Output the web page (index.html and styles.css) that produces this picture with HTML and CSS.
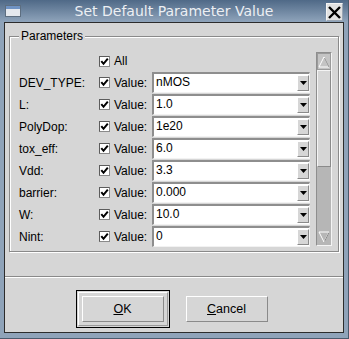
FILE: index.html
```html
<!DOCTYPE html>
<html>
<head>
    <title>Set Default Parameter Value</title>
    <meta name="viewport" content="width=device-width, initial-scale=1">
    <link rel="stylesheet" href="styles.css">
</head>
<body>
    <div class="window">
        <div class="titlebar">
            <span class="win-icon"><span class="win-icon-bar"></span></span>
            <span class="title">Set Default Parameter Value</span>
            <span class="close-btn">
                <svg width="13" height="13" viewBox="0 0 13 13"><path d="M1 1 L12 12 M12 1 L1 12" stroke="#000" stroke-width="2.4" fill="none"/></svg>
            </span>
        </div>
        <div class="client">
            <fieldset class="group">
                <legend>Parameters</legend>
                <div class="scroll-view">
                    <div class="rows">
                        <span></span>
                        <span class="check"><svg width="9" height="9" viewBox="0 0 9 9"><polyline points="1.3,4.2 3.5,6.8 7.8,1.6" stroke="#000" stroke-width="2" fill="none"/></svg></span>
                        <span class="text">All</span>
                        <span></span>

                        <span class="text">DEV_TYPE:</span>
                        <span class="check"><svg width="9" height="9" viewBox="0 0 9 9"><polyline points="1.3,4.2 3.5,6.8 7.8,1.6" stroke="#000" stroke-width="2" fill="none"/></svg></span>
                        <span class="text">Value:</span>
                        <div class="combo"><span class="combo-text">nMOS</span><span class="combo-btn"><svg width="7" height="4" viewBox="0 0 7 4"><polygon points="0,0 7,0 3.5,4" fill="#000"/></svg></span></div>

                        <span class="text">L:</span>
                        <span class="check"><svg width="9" height="9" viewBox="0 0 9 9"><polyline points="1.3,4.2 3.5,6.8 7.8,1.6" stroke="#000" stroke-width="2" fill="none"/></svg></span>
                        <span class="text">Value:</span>
                        <div class="combo"><span class="combo-text">1.0</span><span class="combo-btn"><svg width="7" height="4" viewBox="0 0 7 4"><polygon points="0,0 7,0 3.5,4" fill="#000"/></svg></span></div>

                        <span class="text">PolyDop:</span>
                        <span class="check"><svg width="9" height="9" viewBox="0 0 9 9"><polyline points="1.3,4.2 3.5,6.8 7.8,1.6" stroke="#000" stroke-width="2" fill="none"/></svg></span>
                        <span class="text">Value:</span>
                        <div class="combo"><span class="combo-text">1e20</span><span class="combo-btn"><svg width="7" height="4" viewBox="0 0 7 4"><polygon points="0,0 7,0 3.5,4" fill="#000"/></svg></span></div>

                        <span class="text">tox_eff:</span>
                        <span class="check"><svg width="9" height="9" viewBox="0 0 9 9"><polyline points="1.3,4.2 3.5,6.8 7.8,1.6" stroke="#000" stroke-width="2" fill="none"/></svg></span>
                        <span class="text">Value:</span>
                        <div class="combo"><span class="combo-text">6.0</span><span class="combo-btn"><svg width="7" height="4" viewBox="0 0 7 4"><polygon points="0,0 7,0 3.5,4" fill="#000"/></svg></span></div>

                        <span class="text">Vdd:</span>
                        <span class="check"><svg width="9" height="9" viewBox="0 0 9 9"><polyline points="1.3,4.2 3.5,6.8 7.8,1.6" stroke="#000" stroke-width="2" fill="none"/></svg></span>
                        <span class="text">Value:</span>
                        <div class="combo"><span class="combo-text">3.3</span><span class="combo-btn"><svg width="7" height="4" viewBox="0 0 7 4"><polygon points="0,0 7,0 3.5,4" fill="#000"/></svg></span></div>

                        <span class="text">barrier:</span>
                        <span class="check"><svg width="9" height="9" viewBox="0 0 9 9"><polyline points="1.3,4.2 3.5,6.8 7.8,1.6" stroke="#000" stroke-width="2" fill="none"/></svg></span>
                        <span class="text">Value:</span>
                        <div class="combo"><span class="combo-text">0.000</span><span class="combo-btn"><svg width="7" height="4" viewBox="0 0 7 4"><polygon points="0,0 7,0 3.5,4" fill="#000"/></svg></span></div>

                        <span class="text">W:</span>
                        <span class="check"><svg width="9" height="9" viewBox="0 0 9 9"><polyline points="1.3,4.2 3.5,6.8 7.8,1.6" stroke="#000" stroke-width="2" fill="none"/></svg></span>
                        <span class="text">Value:</span>
                        <div class="combo"><span class="combo-text">10.0</span><span class="combo-btn"><svg width="7" height="4" viewBox="0 0 7 4"><polygon points="0,0 7,0 3.5,4" fill="#000"/></svg></span></div>

                        <span class="text">Nint:</span>
                        <span class="check"><svg width="9" height="9" viewBox="0 0 9 9"><polyline points="1.3,4.2 3.5,6.8 7.8,1.6" stroke="#000" stroke-width="2" fill="none"/></svg></span>
                        <span class="text">Value:</span>
                        <div class="combo"><span class="combo-text">0</span><span class="combo-btn"><svg width="7" height="4" viewBox="0 0 7 4"><polygon points="0,0 7,0 3.5,4" fill="#000"/></svg></span></div>
                    </div>
                    <div class="scrollbar">
                        <div class="sb-btn">
                            <svg width="12" height="12" viewBox="0 0 12 12"><polygon points="6,1 11,11 1,11" fill="none" stroke="#fff" stroke-width="1"/><polyline points="6.5,2 11,11" fill="none" stroke="#8c8c8c" stroke-width="1"/></svg>
                        </div>
                        <div class="sb-slider"></div>
                        <div class="sb-track"></div>
                        <div class="sb-btn sb-btn-down">
                            <svg width="12" height="12" viewBox="0 0 12 12"><polygon points="1,1 11,1 6,11" fill="none" stroke="#fff" stroke-width="1"/><polyline points="11,1.5 6.5,10.5" fill="none" stroke="#8c8c8c" stroke-width="1"/></svg>
                        </div>
                    </div>
                </div>
            </fieldset>
            <div class="separator"></div>
            <div class="buttons">
                <div class="default-frame">
                    <div class="default-ring">
                        <button class="btn"><u>O</u>K</button>
                    </div>
                </div>
                <button class="btn"><u>C</u>ancel</button>
            </div>
        </div>
    </div>
</body>
</html>
```

FILE: styles.css
```css
body {
    margin: 0;
    font-family: "Liberation Sans", Arial, sans-serif;
    font-size: 12px;
    background-color: #8fa3b9;
}
.window {
    width: 349px;
    height: 339px;
    background-color: #8fa3b9;
    box-sizing: border-box;
    border-right: 1px solid #4a5a6c;
    border-bottom: 1px solid #4a5a6c;
}
.titlebar {
    height: 22px;
    display: grid;
    grid-template-columns: 1fr auto 1fr;
    align-items: start;
    padding: 0 5px 0 5px;
    background: linear-gradient(to bottom, #4f6987, #8fa4bb);
}
.win-icon {
    justify-self: start;
    margin-top: 5px;
    width: 14px;
    height: 10px;
    border: 1px solid #5d6e80;
    background-color: #e4e8ee;
}
.win-icon-bar {
    display: block;
    height: 3px;
    background-color: #6f93c4;
}
.title {
    font-family: "DejaVu Sans", sans-serif;
    font-size: 14px;
    line-height: 22px;
    color: #eceff3;
}
.close-btn {
    justify-self: end;
    margin-top: 3px;
    width: 17px;
    height: 18px;
    box-sizing: border-box;
    display: flex;
    align-items: center;
    justify-content: center;
    background-color: #e2e2e2;
    border: 1px solid #f4f4f4;
    border-right-color: #9aa6b4;
    border-bottom-color: #9aa6b4;
}
.client {
    margin: 0 4px 0 4px;
    height: 311px;
    box-sizing: border-box;
    border: 1px solid #2c2c2c;
    background-color: #d6d6d6;
    display: flex;
    flex-direction: column;
}
.group {
    margin: 6px 4px 0 4px;
    padding: 8px 5px 4px 9px;
    border: 1px solid #8a8a8a;
    box-shadow: 1px 1px 0 #fff, inset 1px 1px 0 #fff;
    min-width: 0;
}
.group legend {
    margin-left: 0;
    padding: 0 2px;
    line-height: 14px;
    background-color: #d6d6d6;
}
.scroll-view {
    display: flex;
    align-items: flex-start;
}
.rows {
    display: grid;
    grid-template-columns: 80px 15px 38px 158px;
    grid-template-rows: 20px;
    grid-auto-rows: 21px;
    row-gap: 1px;
    align-items: center;
}
.text {
    white-space: nowrap;
}
.check {
    width: 11px;
    height: 11px;
    box-sizing: border-box;
    display: flex;
    align-items: center;
    justify-content: center;
    background-color: #fff;
    border: 1px solid #8a8a8a;
    border-top-color: #5c5c5c;
    border-left-color: #5c5c5c;
}
.combo {
    height: 21px;
    box-sizing: border-box;
    display: flex;
    background-color: #fff;
    border-top: 2px solid #8e8e8e;
    border-left: 2px solid #8e8e8e;
    border-right: 1px solid #f2f2f2;
    border-bottom: 1px solid #f2f2f2;
}
.combo-text {
    flex: 1;
    padding-left: 2px;
    line-height: 17px;
}
.combo-btn {
    width: 12px;
    box-sizing: border-box;
    margin: 1px 0 1px 0;
    display: flex;
    align-items: center;
    justify-content: center;
    background-color: #d6d6d6;
    border: 1px solid #fff;
    border-right-color: #8a8a8a;
    border-bottom-color: #8a8a8a;
}
.scrollbar {
    margin-left: 6px;
    margin-top: 1px;
    width: 16px;
    height: 194px;
    box-sizing: border-box;
    display: flex;
    flex-direction: column;
    background-color: #b6b6b6;
    border: 1px solid #8e8e8e;
    border-right-color: #f4f4f4;
    border-bottom-color: #f4f4f4;
}
.sb-btn {
    height: 15px;
    display: flex;
    align-items: center;
    justify-content: center;
    background-color: #c4c4c4;
    border: 1px solid #9a9a9a;
}
.sb-btn-down {
    background-color: #b6b6b6;
    border-color: #b6b6b6;
}
.sb-slider {
    height: 97px;
    box-sizing: border-box;
    background-color: #d6d6d6;
    border: 1px solid #f4f4f4;
    border-right-color: #8a8a8a;
    border-bottom-color: #8a8a8a;
}
.sb-track {
    flex: 1;
}
.separator {
    margin-top: 24px;
    border-top: 1px solid #8a8a8a;
    border-bottom: 1px solid #fff;
}
.buttons {
    display: flex;
    justify-content: center;
    align-items: center;
    gap: 16px;
    padding: 12px 5px 0 0;
}
.default-frame {
    border: 1px solid #000;
    padding: 1px;
}
.default-ring {
    border: 1px solid #fff;
    border-right-color: #9a9a9a;
    border-bottom-color: #9a9a9a;
    padding: 3px;
}
.btn {
    width: 82px;
    height: 26px;
    margin: 0;
    padding: 0;
    font-family: "Liberation Sans", Arial, sans-serif;
    font-size: 12.5px;
    color: #000;
    background-color: #d6d6d6;
    border: 1px solid #fff;
    border-right-color: #8a8a8a;
    border-bottom-color: #8a8a8a;
}
```
